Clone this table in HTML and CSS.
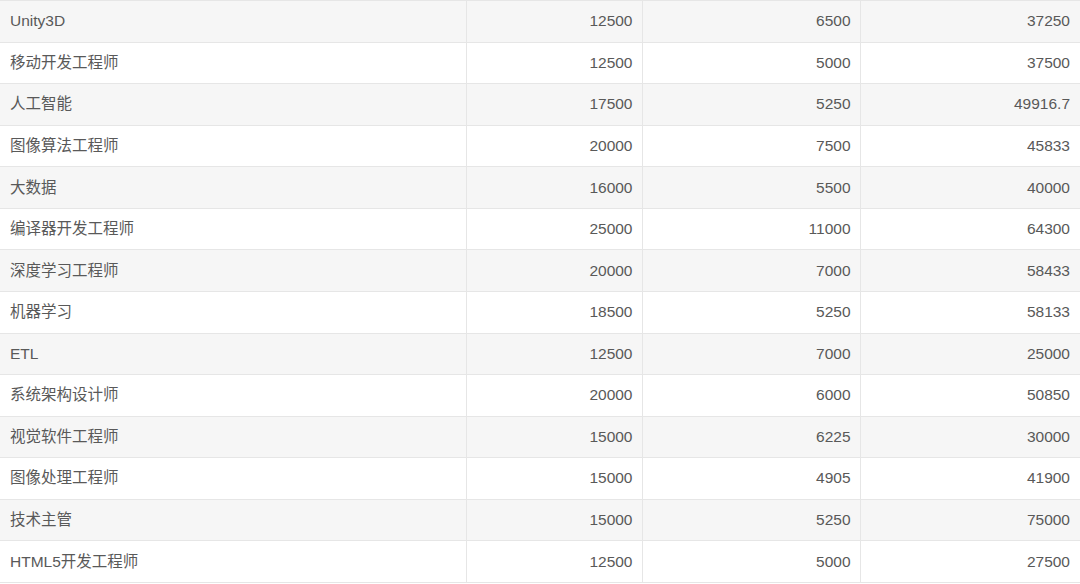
FILE: index.html
```html
<!DOCTYPE html>
<html lang="zh-CN">
<head>
<meta charset="utf-8">
<link rel="stylesheet" href="styles.css">
</head>
<body>
<table class="salary">
  <colgroup>
    <col class="c-name"><col class="c-a"><col class="c-b"><col class="c-c">
  </colgroup>
  <tbody>
    <tr><td>Unity3D</td><td class="num">12500</td><td class="num">6500</td><td class="num">37250</td></tr>
    <tr><td>移动开发工程师</td><td class="num">12500</td><td class="num">5000</td><td class="num">37500</td></tr>
    <tr><td>人工智能</td><td class="num">17500</td><td class="num">5250</td><td class="num">49916.7</td></tr>
    <tr><td>图像算法工程师</td><td class="num">20000</td><td class="num">7500</td><td class="num">45833</td></tr>
    <tr><td>大数据</td><td class="num">16000</td><td class="num">5500</td><td class="num">40000</td></tr>
    <tr><td>编译器开发工程师</td><td class="num">25000</td><td class="num">11000</td><td class="num">64300</td></tr>
    <tr><td>深度学习工程师</td><td class="num">20000</td><td class="num">7000</td><td class="num">58433</td></tr>
    <tr><td>机器学习</td><td class="num">18500</td><td class="num">5250</td><td class="num">58133</td></tr>
    <tr><td>ETL</td><td class="num">12500</td><td class="num">7000</td><td class="num">25000</td></tr>
    <tr><td>系统架构设计师</td><td class="num">20000</td><td class="num">6000</td><td class="num">50850</td></tr>
    <tr><td>视觉软件工程师</td><td class="num">15000</td><td class="num">6225</td><td class="num">30000</td></tr>
    <tr><td>图像处理工程师</td><td class="num">15000</td><td class="num">4905</td><td class="num">41900</td></tr>
    <tr><td>技术主管</td><td class="num">15000</td><td class="num">5250</td><td class="num">75000</td></tr>
    <tr><td>HTML5开发工程师</td><td class="num">12500</td><td class="num">5000</td><td class="num">27500</td></tr>
  </tbody>
</table>
</body>
</html>
```
FILE: styles.css
```css
html, body {
  margin: 0;
  padding: 0;
  background: #ffffff;
}

.salary {
  width: 1080px;
  border-collapse: collapse;
  table-layout: fixed;
  font-family: "Liberation Sans", Arial, "Noto Sans CJK SC", sans-serif;
  font-size: 15.5px;
  color: #595959;
}

.c-name { width: 466px; }
.c-a { width: 176px; }
.c-b { width: 218px; }
.c-c { width: 220px; }

.salary td {
  height: 41.57px;
  padding: 0 9px 0 10px;
  border: 1px solid #e6e6e6;
  box-sizing: border-box;
  vertical-align: middle;
  white-space: nowrap;
  line-height: 20px;
}

.salary td:first-child { border-left: none; }
.salary td:last-child { border-right: none; padding-right: 10px; }

.salary tr:nth-child(odd) td { background: #f6f6f6; }

.salary .num { text-align: right; }
```
